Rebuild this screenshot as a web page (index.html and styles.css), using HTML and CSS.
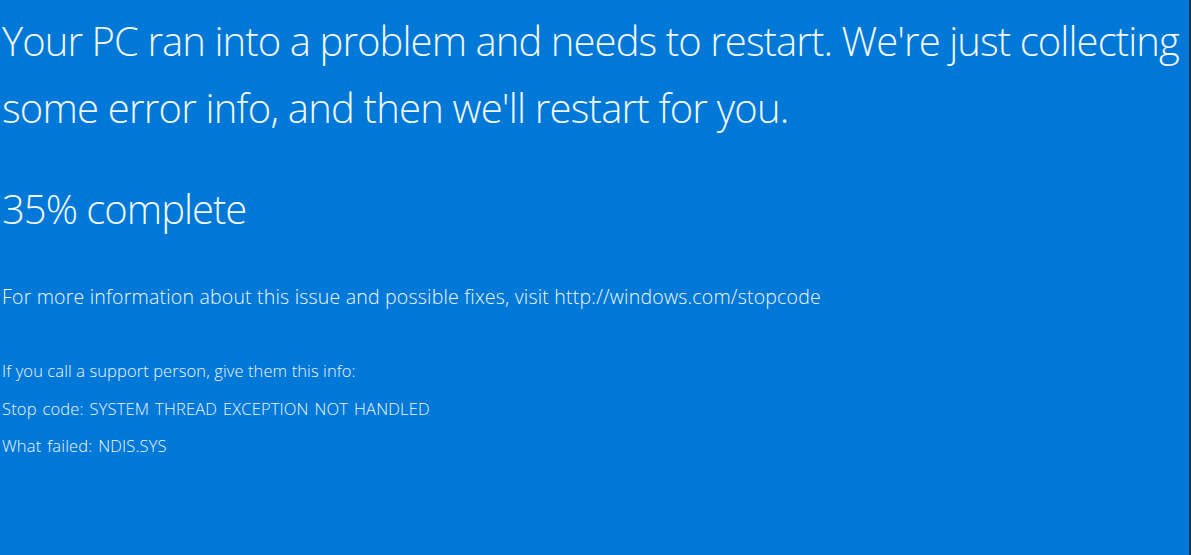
FILE: index.html
```html
<!DOCTYPE html>
<html lang="en">
<head>
<meta charset="utf-8">
<title>Your PC ran into a problem</title>
<link rel="stylesheet" href="styles.css">
</head>
<body>
<main class="screen">
  <section class="content">
    <h1 class="headline">
      <span class="line">Your PC ran into a problem and needs to restart. We're just collecting</span>
      <span class="line">some error info, and then we'll restart for you.</span>
    </h1>
    <p class="progress">35% complete</p>
    <p class="info">For more information about this issue and possible fixes, visit http://windows.com/stopcode</p>
    <div class="support">
      <p class="detail">If you call a support person, give them this info:</p>
      <p class="detail detail-caps">Stop code: SYSTEM THREAD EXCEPTION NOT HANDLED</p>
      <p class="detail detail-caps">What failed: NDIS.SYS</p>
    </div>
  </section>
  <div class="edge"></div>
</main>
</body>
</html>
```
FILE: styles.css
```css
html, body {
  margin: 0;
  padding: 0;
  height: 100%;
}

body {
  background: #0078d7;
  color: #f2f7fc;
  font-family: "Open Sans", "Noto Sans", "DejaVu Sans", sans-serif;
  font-weight: 300;
  overflow: hidden;
}

.screen {
  display: flex;
  height: 555px;
  width: 1191px;
}

.content {
  flex: 1;
  overflow: hidden;
  padding: 7px 0 0 2px;
  white-space: nowrap;
}

.edge {
  width: 2px;
  background: #1d3350;
}

.headline {
  margin: 0;
  font-size: 40px;
  font-weight: 300;
  line-height: 67px;
  letter-spacing: -0.92px;
}

.line {
  display: block;
}

.line + .line {
  letter-spacing: -0.8px;
}

.progress {
  margin: 35px 0 0;
  font-size: 40px;
  line-height: 66px;
  letter-spacing: -1px;
}

.info {
  margin: 42px 0 0;
  font-size: 19.5px;
  line-height: 26px;
  letter-spacing: 0.2px;
}

.support {
  margin-top: 50px;
  display: flex;
  flex-direction: column;
  gap: 15.5px;
}

.detail {
  margin: 0;
  font-size: 16.5px;
  line-height: 22px;
  letter-spacing: 0.1px;
}

.detail-caps {
  letter-spacing: 0.15px;
  word-spacing: 1.5px;
}
```
